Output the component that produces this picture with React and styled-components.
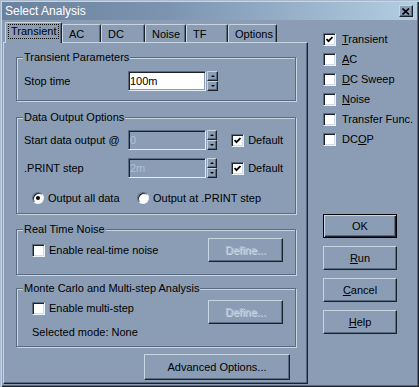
import React from 'react';
import styled, { createGlobalStyle, css } from 'styled-components';

const FACE = '#8a9db5';
const LIGHT = '#c8d5e3';
const SHADOW = '#5a6b80';
const DARK = '#1b222c';
const GRAYTEXT = '#b2c1d1';

const GlobalStyle = createGlobalStyle`
  body {
    margin: 0;
    background: ${FACE};
    font-family: "Liberation Sans", Arial, sans-serif;
    font-size: 11px;
    color: #000;
  }
`;

const Window = styled.div`
  width: 419px;
  height: 387px;
  box-sizing: border-box;
  padding: 2px;
  background: ${FACE};
  box-shadow: inset 1px 1px 0 #a9bacd, inset 2px 2px 0 ${LIGHT},
    inset -1px -1px 0 ${DARK}, inset -2px -2px 0 ${SHADOW};
  display: flex;
  flex-direction: column;
`;

const TitleBar = styled.div`
  height: 18px;
  flex: none;
  display: flex;
  align-items: center;
  justify-content: space-between;
  padding: 0 4px 0 3px;
  background: linear-gradient(to right, #6b829e, #7c94b0 40%, #b3cde1);
  color: #fff;
  font-size: 12px;
`;

const CloseButton = styled.div`
  width: 14px;
  height: 12px;
  box-sizing: border-box;
  background: ${FACE};
  border: 1px solid;
  border-color: ${LIGHT} ${DARK} ${DARK} ${LIGHT};
  box-shadow: inset -1px -1px 0 ${SHADOW};
  display: flex;
  align-items: center;
  justify-content: center;
`;

const Body = styled.div`
  flex: 1;
  display: flex;
  padding-left: 1px;
`;

const LeftCol = styled.div`
  width: 305px;
  display: flex;
  flex-direction: column;
`;

const TabRow = styled.div`
  height: 20px;
  margin-top: 2px;
  padding-left: 2px;
  display: flex;
  align-items: flex-end;
  position: relative;
  z-index: 2;
`;

const Tab = styled.div`
  width: ${(p) => p.$w}px;
  height: ${(p) => (p.$active ? 21 : 18)}px;
  margin-bottom: ${(p) => (p.$active ? -1 : 0)}px;
  box-sizing: border-box;
  background: ${FACE};
  border-left: 1px solid ${LIGHT};
  border-top: 1px solid ${LIGHT};
  border-right: 1px solid ${DARK};
  border-radius: 2px 2px 0 0;
  box-shadow: inset -1px 0 0 ${SHADOW};
  padding: ${(p) => (p.$active ? '1px 0 0 2px' : '2px 0 0 6px')};
  line-height: 14px;
  white-space: nowrap;
`;

const Focus = styled.span`
  display: inline-block;
  border: 1px dotted #000;
  padding: 0 2px;
  line-height: 13px;
`;

const Panel = styled.div`
  height: 342px;
  box-sizing: border-box;
  border-left: 1px solid ${LIGHT};
  border-top: 1px solid ${LIGHT};
  border-right: 1px solid ${DARK};
  border-bottom: 1px solid ${DARK};
  box-shadow: inset -1px -1px 0 ${SHADOW};
  padding: 7px 0 0 12px;
`;

const Group = styled.fieldset`
  width: 280px;
  min-width: 0;
  box-sizing: border-box;
  margin: ${(p) => p.$top || 0}px 0 0 0;
  padding: ${(p) => p.$pad};
  border: 1px solid ${SHADOW};
  box-shadow: inset 1px 1px 0 ${LIGHT}, 1px 1px 0 ${LIGHT};
`;

const Legend = styled.legend`
  padding: 0 1px;
  margin-left: -1px;
  line-height: 14px;
  background: ${FACE};
`;

const GroupBody = styled.div`
  display: flex;
  flex-direction: column;
  gap: ${(p) => p.$gap || 0}px;
`;

const FieldRow = styled.div`
  display: flex;
  align-items: ${(p) => p.$align || 'center'};
  height: ${(p) => p.$h || 20}px;
  padding-left: ${(p) => p.$indent || 0}px;
  margin-top: ${(p) => p.$mt || 0}px;
`;

const FieldLabel = styled.span`
  width: 104px;
  flex: none;
`;

const TextBox = styled.input`
  width: 78px;
  height: 20px;
  box-sizing: border-box;
  margin: 0;
  padding: 0 1px;
  font: inherit;
  color: #000;
  background: #fff;
  border: 1px solid;
  border-color: ${SHADOW} #e4ebf3 #e4ebf3 ${SHADOW};
  box-shadow: inset 1px 1px 0 ${DARK}, inset -1px -1px 0 ${FACE};
  outline: none;
  &:disabled {
    background: ${FACE};
    color: ${GRAYTEXT};
    -webkit-text-fill-color: ${GRAYTEXT};
  }
`;

const Spin = styled.div`
  width: 11px;
  height: 20px;
  margin-left: 1px;
  display: flex;
  flex-direction: column;
`;

const SpinButton = styled.div`
  flex: 1;
  box-sizing: border-box;
  background: ${FACE};
  border: 1px solid;
  border-color: ${LIGHT} ${DARK} ${DARK} ${LIGHT};
  box-shadow: inset -1px -1px 0 ${SHADOW};
  display: flex;
  align-items: center;
  justify-content: center;
  &::after {
    content: '';
    border-left: 2px solid transparent;
    border-right: 2px solid transparent;
    ${(p) =>
      p.$down
        ? css`border-top: 2px solid #000;`
        : css`border-bottom: 2px solid #000;`}
  }
`;

const Check = styled.label`
  display: inline-flex;
  align-items: center;
  gap: ${(p) => p.$gap || 4}px;
  margin-left: ${(p) => p.$ml || 0}px;
  height: ${(p) => p.$h || 14}px;
  margin-top: ${(p) => p.$mt || 0}px;
  white-space: nowrap;
`;

const Box = styled.span`
  width: 13px;
  height: 13px;
  flex: none;
  box-sizing: border-box;
  background: #fff;
  border: 1px solid;
  border-color: ${SHADOW} #eef3f8 #eef3f8 ${SHADOW};
  box-shadow: inset 1px 1px 0 ${DARK}, inset -1px -1px 0 #d2dce6;
  display: flex;
  align-items: center;
  justify-content: center;
`;

const RadioItem = styled.label`
  display: inline-flex;
  align-items: center;
  gap: 4px;
  width: ${(p) => (p.$w ? `${p.$w}px` : 'auto')};
  white-space: nowrap;
`;

const RadioDot = styled.span`
  width: 12px;
  height: 12px;
  flex: none;
  box-sizing: border-box;
  border-radius: 50%;
  background: #fff;
  border: 1px solid;
  border-color: ${SHADOW} #eef3f8 #eef3f8 ${SHADOW};
  box-shadow: inset 1px 1px 0 ${DARK};
  display: flex;
  align-items: center;
  justify-content: center;
  &::after {
    content: '';
    width: 4px;
    height: 4px;
    border-radius: 50%;
    background: ${(p) => (p.$on ? '#000' : 'transparent')};
  }
`;

const Button = styled.button`
  width: ${(p) => p.$w}px;
  height: ${(p) => p.$h || 24}px;
  flex: none;
  margin: 0;
  padding: 0;
  box-sizing: border-box;
  font: inherit;
  font-size: 11px;
  color: #000;
  background: ${FACE};
  border: 1px solid;
  border-color: ${LIGHT} ${DARK} ${DARK} ${LIGHT};
  box-shadow: inset -1px -1px 0 ${SHADOW};
  margin-left: ${(p) => (p.$right ? 'auto' : '0')};
  &:disabled {
    color: ${GRAYTEXT};
    text-shadow: 1px 1px 0 #d3dde8;
  }
  ${(p) =>
    p.$default &&
    css`
      border-color: #000;
      box-shadow: inset 1px 1px 0 ${LIGHT}, inset -1px -1px 0 ${DARK},
        inset -2px -2px 0 ${SHADOW};
    `}
`;

const Note = styled.div`
  line-height: 14px;
  padding-left: 8px;
  margin-top: 1px;
`;

const AdvancedRow = styled.div`
  display: flex;
  justify-content: flex-end;
  padding-right: 17px;
  margin-top: 7px;
`;

const RightCol = styled.div`
  margin-left: 15px;
  padding-top: 9px;
  display: flex;
  flex-direction: column;
`;

const ButtonStack = styled.div`
  margin-top: 65px;
  display: flex;
  flex-direction: column;
  gap: 8px;
`;

const CheckMark = () => (
  <svg width="7" height="7" viewBox="0 0 7 7">
    <polyline points="0.5,3 2.5,5.2 6.5,1" fill="none" stroke="#000" strokeWidth="1.8" />
  </svg>
);

const CheckBox = ({ checked, children, ...rest }) => (
  <Check {...rest}>
    <Box>{checked && <CheckMark />}</Box>
    <span>{children}</span>
  </Check>
);

const SpinBox = () => (
  <Spin>
    <SpinButton />
    <SpinButton $down />
  </Spin>
);

const tabs = [
  { name: 'Transient', w: 57 },
  { name: 'AC', w: 39 },
  { name: 'DC', w: 44 },
  { name: 'Noise', w: 41 },
  { name: 'TF', w: 42 },
  { name: 'Options', w: 49 },
];

const analyses = [
  { label: <><u>T</u>ransient</>, checked: true },
  { label: <><u>A</u>C</> },
  { label: <><u>D</u>C Sweep</> },
  { label: <><u>N</u>oise</> },
  { label: <>Transfer Func.</> },
  { label: <>DC<u>O</u>P</> },
];

export default function App() {
  return (
    <>
      <GlobalStyle />
      <Window>
        <TitleBar>
          <span>Select Analysis</span>
          <CloseButton>
            <svg width="8" height="7" viewBox="0 0 8 7">
              <path d="M0.5 0.5 L7 6.5 M7 0.5 L0.5 6.5" stroke="#000" strokeWidth="1.6" />
            </svg>
          </CloseButton>
        </TitleBar>
        <Body>
          <LeftCol>
            <TabRow>
              {tabs.map((t, i) => (
                <Tab key={t.name} $w={t.w} $active={i === 0}>
                  {i === 0 ? <Focus>{t.name}</Focus> : t.name}
                </Tab>
              ))}
            </TabRow>
            <Panel>
              <Group $pad="7px 12px 9px 7px">
                <Legend>Transient Parameters</Legend>
                <FieldRow>
                  <FieldLabel>Stop time</FieldLabel>
                  <TextBox defaultValue="100m" />
                  <SpinBox />
                </FieldRow>
              </Group>

              <Group $top={9} $pad="6px 12px 5px 7px">
                <Legend>Data Output Options</Legend>
                <GroupBody $gap={8}>
                  <FieldRow>
                    <FieldLabel>Start data output @</FieldLabel>
                    <TextBox defaultValue="0" disabled />
                    <SpinBox />
                    <CheckBox checked $ml={14}>Default</CheckBox>
                  </FieldRow>
                  <FieldRow>
                    <FieldLabel>.PRINT step</FieldLabel>
                    <TextBox defaultValue="2m" disabled />
                    <SpinBox />
                    <CheckBox checked $ml={14}>Default</CheckBox>
                  </FieldRow>
                  <FieldRow $indent={8} $mt={2}>
                    <RadioItem $w={105}>
                      <RadioDot $on />
                      <span>Output all data</span>
                    </RadioItem>
                    <RadioItem>
                      <RadioDot />
                      <span>Output at .PRINT step</span>
                    </RadioItem>
                  </FieldRow>
                </GroupBody>
              </Group>

              <Group $top={8} $pad="2px 12px 12px 7px">
                <Legend>Real Time Noise</Legend>
                <FieldRow $h={24} $indent={8}>
                  <CheckBox>Enable real-time noise</CheckBox>
                  <Button $w={75} $right disabled>Define...</Button>
                </FieldRow>
              </Group>

              <Group $top={6} $pad="5px 12px 7px 7px">
                <Legend>Monte Carlo and Multi-step Analysis</Legend>
                <FieldRow $h={24} $indent={8} $align="flex-start">
                  <CheckBox $mt={1}>Enable multi-step</CheckBox>
                  <Button $w={75} $right disabled>Define...</Button>
                </FieldRow>
                <Note>Selected mode: None</Note>
              </Group>

              <AdvancedRow>
                <Button $w={146} $h={26}>Advanced Options...</Button>
              </AdvancedRow>
            </Panel>
          </LeftCol>

          <RightCol>
            {analyses.map((a, i) => (
              <CheckBox key={i} checked={a.checked} $gap={6} $h={20}>
                {a.label}
              </CheckBox>
            ))}
            <ButtonStack>
              <Button $w={74} $default>OK</Button>
              <Button $w={74}><u>R</u>un</Button>
              <Button $w={74}><u>C</u>ancel</Button>
              <Button $w={74}><u>H</u>elp</Button>
            </ButtonStack>
          </RightCol>
        </Body>
      </Window>
    </>
  );
}
